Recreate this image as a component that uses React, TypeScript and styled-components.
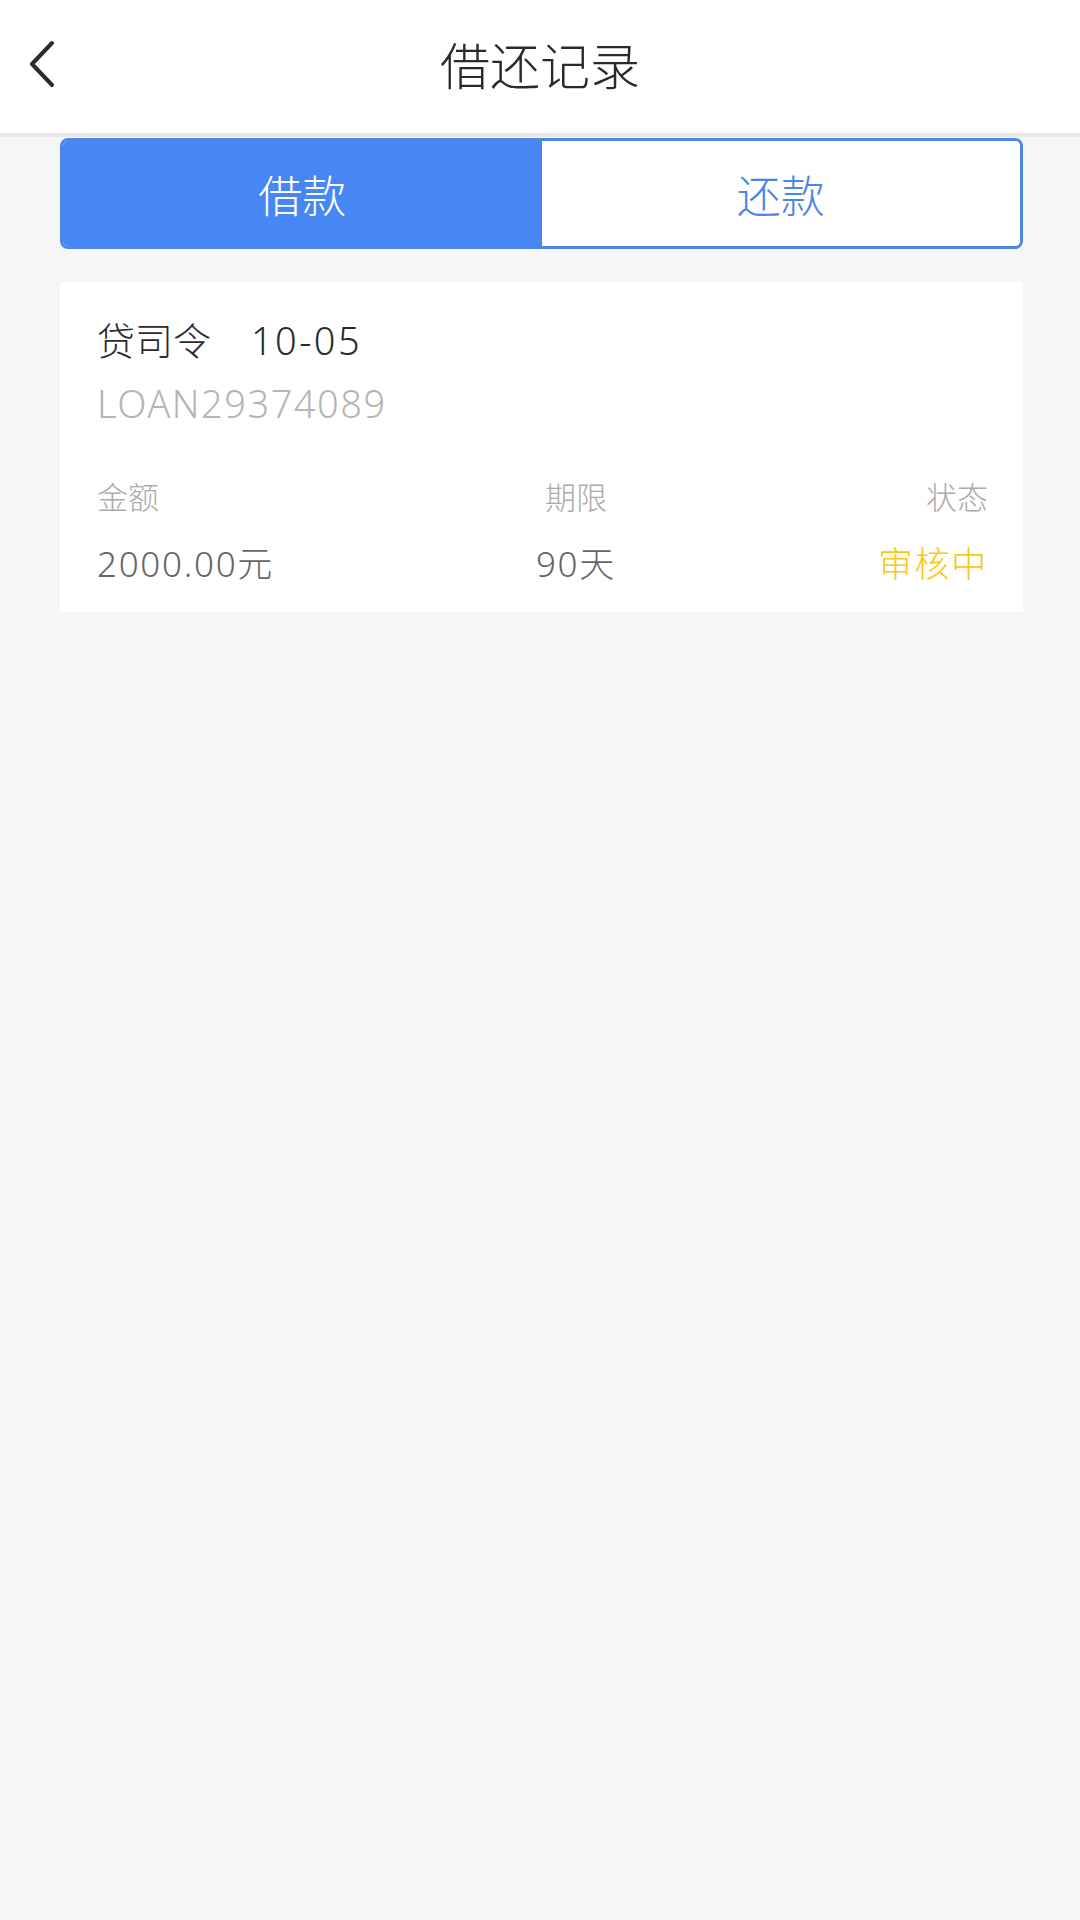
import styled, { createGlobalStyle } from 'styled-components'

const GlobalStyle = createGlobalStyle`
  html, body {
    margin: 0;
    padding: 0;
    background: #f6f6f6;
    font-family: "Noto Sans", "Noto Sans CJK SC", sans-serif;
    font-weight: 300;
  }
`

type Column = {
  label: string
  value: string
  align: 'left' | 'center' | 'right'
  highlight?: boolean
}

const columns: Column[] = [
  { label: '金额', value: '2000.00元', align: 'left' },
  { label: '期限', value: '90天', align: 'center' },
  { label: '状态', value: '审核中', align: 'right', highlight: true },
]

const BackIcon = () => (
  <svg width="28" height="48" viewBox="0 0 28 48" fill="none">
    <path d="M24 3 L4 24 L24 45" stroke="#2b2b2b" strokeWidth="4" strokeLinecap="round" strokeLinejoin="round" />
  </svg>
)

const App = () => {
  return (
    <Page>
      <GlobalStyle />
      <Header>
        <BackButton>
          <BackIcon />
        </BackButton>
        <Title>借还记录</Title>
        <span />
      </Header>

      <Tabs>
        <Tab active>借款</Tab>
        <Tab>还款</Tab>
      </Tabs>

      <Card>
        <CardTitle>
          <span>贷司令</span>
          <Date>10-05</Date>
        </CardTitle>
        <LoanNo>LOAN29374089</LoanNo>
        <Columns>
          {columns.map((c) => (
            <Col key={c.label} align={c.align}>
              <Label>{c.label}</Label>
              <Value highlight={c.highlight}>{c.value}</Value>
            </Col>
          ))}
        </Columns>
      </Card>
    </Page>
  )
}

export default App

const Page = styled.div`
  min-height: 1920px;
  background: #f6f6f6;
`

const Header = styled.div`
  height: 133px;
  background: #fff;
  border-bottom: 4px solid #e8e8e8;
  display: grid;
  grid-template-columns: 1fr auto 1fr;
  align-items: center;
`

const BackButton = styled.div`
  padding-left: 28px;
  padding-bottom: 6px;
  display: flex;
  align-items: center;
`

const Title = styled.div`
  font-size: 50px;
  color: #2a2a2a;
  line-height: 60px;
  padding-bottom: 2px;
`

const Tabs = styled.div`
  margin: 1px 57px 0 60px;
  height: 111px;
  box-sizing: border-box;
  border: 3px solid #4d88e6;
  border-radius: 8px;
  overflow: hidden;
  display: flex;
`

const Tab = styled.div<{ active?: boolean }>`
  flex: 1;
  display: flex;
  align-items: center;
  justify-content: center;
  font-size: 44px;
  background: ${(p) => (p.active ? '#4687f5' : '#fff')};
  color: ${(p) => (p.active ? '#fff' : '#4a86e8')};
`

const Card = styled.div`
  margin: 33px 57px 0 60px;
  background: #fff;
  padding: 35px 35px 0 37px;
  height: 330px;
  box-sizing: border-box;
`

const CardTitle = styled.div`
  font-size: 38px;
  line-height: 46px;
  color: #2b2b2b;
  display: flex;
  gap: 40px;
`

const Date = styled.span`
  letter-spacing: 2.4px;
`

const LoanNo = styled.div`
  margin-top: 17px;
  font-size: 38px;
  line-height: 46px;
  color: #b5b5b5;
  letter-spacing: 1.5px;
`

const Columns = styled.div`
  margin-top: 51px;
  display: flex;
  justify-content: space-between;
`

const Col = styled.div<{ align: 'left' | 'center' | 'right' }>`
  display: flex;
  flex-direction: column;
  text-align: ${(p) => p.align};
`

const Label = styled.div`
  font-size: 31px;
  line-height: 40px;
  color: #ababab;
`

const Value = styled.div<{ highlight?: boolean }>`
  margin-top: 26px;
  font-size: 35px;
  line-height: 42px;
  letter-spacing: 1.7px;
  color: ${(p) => (p.highlight ? '#f8c816' : '#666')};
`
